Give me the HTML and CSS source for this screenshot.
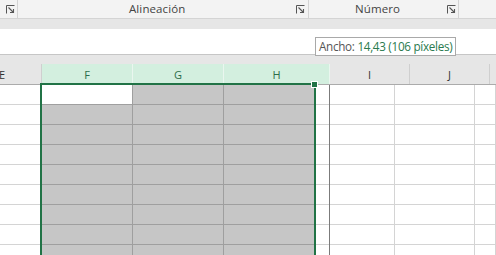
FILE: index.html
```html
<!DOCTYPE html>
<html lang="es">
<head>
<meta charset="utf-8">
<link rel="stylesheet" href="styles.css">
</head>
<body>
<div class="app">
  <div class="ribbon">
    <div class="grp grp-a">
      <svg class="launcher" width="9" height="9" viewBox="0 0 9 9"><path d="M0.5 8.5V0.5H8.5" fill="none" stroke="#555" stroke-width="1"/><path d="M2.5 2.5L7.5 7.5M4 7.5H7.5V4" fill="none" stroke="#555" stroke-width="1.1"/></svg>
    </div>
    <div class="grp grp-b">
      <span class="grp-label">Alineación</span>
      <svg class="launcher" width="9" height="9" viewBox="0 0 9 9"><path d="M0.5 8.5V0.5H8.5" fill="none" stroke="#555" stroke-width="1"/><path d="M2.5 2.5L7.5 7.5M4 7.5H7.5V4" fill="none" stroke="#555" stroke-width="1.1"/></svg>
    </div>
    <div class="grp grp-c">
      <span class="grp-label">Número</span>
      <svg class="launcher" width="9" height="9" viewBox="0 0 9 9"><path d="M0.5 8.5V0.5H8.5" fill="none" stroke="#555" stroke-width="1"/><path d="M2.5 2.5L7.5 7.5M4 7.5H7.5V4" fill="none" stroke="#555" stroke-width="1.1"/></svg>
    </div>
    <div class="grp grp-d"></div>
  </div>
  <div class="band"></div>
  <div class="formula">
    <div class="tooltip">Ancho: <span class="tip-val">14,43 (106 píxeles)</span></div>
  </div>
  <div class="strip"></div>
  <div class="headers">
    <div class="hd hd-e">E</div>
    <div class="hd hd-f on">F</div>
    <div class="hd hd-g on">G</div>
    <div class="hd hd-h on">H</div>
    <div class="hd hd-i">I</div>
    <div class="hd hd-j">J</div>
    <div class="hd hd-k"></div>
  </div>
  <div class="sheet">
    <div class="grid">
      <div class="c"></div><div class="c active"></div><div class="c sel"></div><div class="c sel"></div><div class="c"></div><div class="c"></div><div class="c"></div>
      <div class="c"></div><div class="c sel"></div><div class="c sel"></div><div class="c sel"></div><div class="c"></div><div class="c"></div><div class="c"></div>
      <div class="c"></div><div class="c sel"></div><div class="c sel"></div><div class="c sel"></div><div class="c"></div><div class="c"></div><div class="c"></div>
      <div class="c"></div><div class="c sel"></div><div class="c sel"></div><div class="c sel"></div><div class="c"></div><div class="c"></div><div class="c"></div>
      <div class="c"></div><div class="c sel"></div><div class="c sel"></div><div class="c sel"></div><div class="c"></div><div class="c"></div><div class="c"></div>
      <div class="c"></div><div class="c sel"></div><div class="c sel"></div><div class="c sel"></div><div class="c"></div><div class="c"></div><div class="c"></div>
      <div class="c"></div><div class="c sel"></div><div class="c sel"></div><div class="c sel"></div><div class="c"></div><div class="c"></div><div class="c"></div>
      <div class="c"></div><div class="c sel"></div><div class="c sel"></div><div class="c sel"></div><div class="c"></div><div class="c"></div><div class="c"></div>
      <div class="c"></div><div class="c sel"></div><div class="c sel"></div><div class="c sel"></div><div class="c"></div><div class="c"></div><div class="c"></div>
    </div>
    <div class="selbox"></div>
    <div class="handle"></div>
    <div class="dragline"></div>
  </div>
</div>
</body>
</html>
```

FILE: styles.css
```css
* { box-sizing: border-box; }
html, body { margin: 0; padding: 0; }
body {
  width: 496px;
  height: 255px;
  overflow: hidden;
  background: #fff;
  font-family: "Open Sans", "Noto Sans", sans-serif;
}
.app { width: 496px; height: 255px; overflow: hidden; position: relative; }

.ribbon {
  height: 19px;
  background: #f3f3f3;
  border-bottom: 1px solid #d4d4d4;
  display: flex;
}
.grp {
  height: 18px;
  display: flex;
  align-items: center;
  border-right: 1px solid #d4d4d4;
  position: relative;
}
.grp-a { width: 18px; padding-left: 6px; }
.grp-b { width: 291px; padding-left: 111px; }
.grp-c { width: 150px; padding-left: 46px; }
.grp-d { flex: 1; border-right: none; }
.grp-label {
  font-size: 11.5px;
  color: #444;
  line-height: 18px;
  letter-spacing: 0.1px;
}
.grp-b .launcher { margin-left: auto; margin-right: 3px; }
.grp-c .launcher { margin-left: auto; margin-right: 2px; }
.launcher { display: block; margin-top: 1px; }

.band { height: 10px; background: #e6e6e6; }
.formula {
  height: 26px;
  background: #fff;
  border-bottom: 1px solid #c6c6c6;
  position: relative;
}
.tooltip {
  position: absolute;
  left: 315px;
  top: 8px;
  width: 141px;
  height: 19px;
  background: #fff;
  border: 1px solid #a9a9a9;
  font-size: 11.7px;
  line-height: 17px;
  color: #555;
  padding-left: 3px;
  white-space: nowrap;
  letter-spacing: -0.3px;
  z-index: 2;
}
.tip-val { color: #2a7a4e; }
.strip { height: 9px; background: #e6e6e6; }

.headers {
  height: 21px;
  display: flex;
  background: #e6e6e6;
  border-bottom: 1px solid #ababab;
}
.hd {
  height: 20px;
  border-right: 1px solid #cfcfcf;
  font-size: 11px;
  color: #333;
  display: flex;
  align-items: center;
  justify-content: center;
  line-height: 1;
}
.hd.on { background: #d3efdf; color: #2d6e4a; border-right-color: #eaf6ef; }
.hd-e { width: 42px; justify-content: flex-start; padding-left: 0; text-indent: -1px; }
.hd-f { width: 91px; }
.hd-g { width: 91px; }
.hd-h { width: 106px; }
.hd-i { width: 80px; }
.hd-j { width: 80px; }
.hd-k { flex: 1; border-right: none; }

.sheet { position: relative; height: 170px; }
.grid {
  display: grid;
  grid-template-columns: 42px 91px 91px 91px 80px 80px 1fr;
  grid-auto-rows: 20px;
}
.c {
  border-right: 1px solid #d4d4d4;
  border-bottom: 1px solid #d4d4d4;
  background: #fff;
}
.c.sel { background: #c6c6c6; border-color: #9f9f9f; }
.c.active { background: #fff; border-color: #9f9f9f; }

.selbox {
  position: absolute;
  left: 40px;
  top: -2px;
  width: 276px;
  height: 200px;
  border: 2px solid #217346;
  pointer-events: none;
}
.handle {
  position: absolute;
  left: 312px;
  top: -3px;
  width: 5px;
  height: 5px;
  background: #217346;
  box-shadow: 0 0 0 1px #fff;
}
.dragline {
  position: absolute;
  left: 329px;
  top: 0;
  width: 1px;
  height: 170px;
  background: #7b7b7b;
}
```
